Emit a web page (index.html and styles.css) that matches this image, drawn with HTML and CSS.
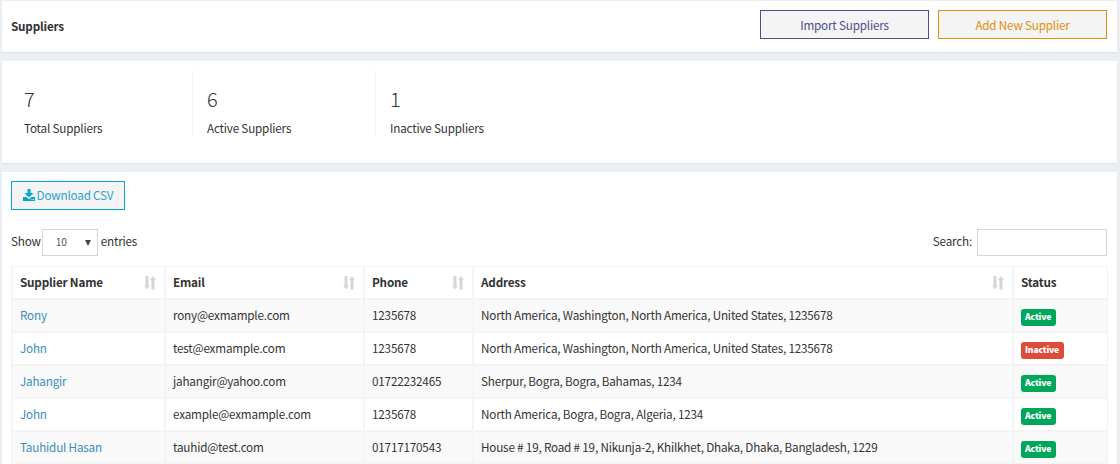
FILE: index.html
```html
<!DOCTYPE html>
<html lang="en">
<head>
<meta charset="utf-8">
<title>Suppliers</title>
<link rel="stylesheet" href="styles.css">
</head>
<body>
<svg width="0" height="0" class="defs">
  <symbol id="sort" viewBox="0 0 12 14"><path d="M1.500 0h3v9.500H6l-3 4L0 9.500h1.500zM7.500 13.500V4H6l3-4 3 4h-1.500v9.500z"/></symbol>
</svg>
<main class="page">
  <header class="box head">
    <h1 class="title">Suppliers</h1>
    <div class="actions">
      <a class="btn btn-purple">Import Suppliers</a>
      <a class="btn btn-orange">Add New Supplier</a>
    </div>
  </header>
  <section class="box stats">
    <div class="stat"><span class="num">7</span><span class="cap">Total Suppliers</span></div>
    <div class="stat"><span class="num">6</span><span class="cap">Active Suppliers</span></div>
    <div class="stat"><span class="num">1</span><span class="cap">Inactive Suppliers</span></div>
  </section>
  <section class="box list">
    <a class="btn btn-csv"><svg class="dl" viewBox="0 0 12 12"><path d="M4.500 0h3v4H10.500L6 8.500 1.500 4H4.500z"/><path fill-rule="evenodd" d="M0 8h3.500L6 10.300 8.500 8H12v4H0zM8.500 10v.9h.9V10zM10.200 10v.9h.9V10z"/></svg><span>Download CSV</span></a>
    <div class="controls">
      <div class="length"><span>Show</span><span class="select"><span>10</span><i class="caret"></i></span><span>entries</span></div>
      <label class="search"><span>Search:</span><input class="field" type="text"></label>
    </div>
    <table class="table">
      <colgroup><col class="c1"><col class="c2"><col class="c3"><col class="c4"><col class="c5"></colgroup>
      <thead><tr>
        <th><div class="th"><span>Supplier Name</span><svg class="sort"><use href="#sort"/></svg></div></th>
        <th><div class="th"><span>Email</span><svg class="sort"><use href="#sort"/></svg></div></th>
        <th><div class="th"><span>Phone</span><svg class="sort"><use href="#sort"/></svg></div></th>
        <th><div class="th"><span>Address</span><svg class="sort"><use href="#sort"/></svg></div></th>
        <th><div class="th"><span>Status</span></div></th>
      </tr></thead>
      <tbody>
        <tr><td><a class="link">Rony</a></td><td>rony@exmample.com</td><td>1235678</td><td>North America, Washington, North America, United States, 1235678</td><td><span class="label on">Active</span></td></tr>
        <tr><td><a class="link">John</a></td><td>test@exmample.com</td><td>1235678</td><td>North America, Washington, North America, United States, 1235678</td><td><span class="label off">Inactive</span></td></tr>
        <tr><td><a class="link">Jahangir</a></td><td>jahangir@yahoo.com</td><td>01722232465</td><td>Sherpur, Bogra, Bogra, Bahamas, 1234</td><td><span class="label on">Active</span></td></tr>
        <tr><td><a class="link">John</a></td><td>example@exmample.com</td><td>1235678</td><td>North America, Bogra, Bogra, Algeria, 1234</td><td><span class="label on">Active</span></td></tr>
        <tr><td><a class="link">Tauhidul Hasan</a></td><td>tauhid@test.com</td><td>01717170543</td><td>House # 19, Road # 19, Nikunja-2, Khilkhet, Dhaka, Dhaka, Bangladesh, 1229</td><td><span class="label on">Active</span></td></tr>
      </tbody>
    </table>
  </section>
</main>
</body>
</html>
```
FILE: styles.css
```css
* { box-sizing: border-box; }
html, body { height: 100%; }
body {
  margin: 0;
  overflow: hidden;
  background: #ebeef3;
  color: #333;
  font: 11.7px/20px "Noto Sans CJK SC", "Open Sans", sans-serif;
  letter-spacing: -.19px;
}
.defs { display: none; }
.page { height: 464px; overflow: hidden; padding: 1px 3px 0 2px; display: flex; flex-direction: column; gap: 9px; }
.box { flex: none; background: #fff; box-shadow: 0 1px 1px rgba(0, 0, 0, .05); }
.head { height: 51px; padding: 9px 10px 0 9px; display: flex; justify-content: space-between; }
.title { margin: 6px 0 0; font-size: 11.7px; line-height: 20px; font-weight: 700; }
.actions { display: flex; gap: 9px; }
.btn { display: flex; align-items: center; justify-content: center; height: 29px; background: #f4f4f4; border: 1px solid; }
.btn-purple { width: 169px; color: #514b8f; }
.btn-orange { width: 169px; color: #e08e0b; }
.btn-csv { width: 114px; color: #00a7d0; gap: 2px; }
.btn-csv span { margin-bottom: 2px; color: #2ba3cf; }
.dl { width: 12px; height: 12px; margin-bottom: 2px; fill: #00a7d0; }
.stats { height: 102px; padding: 9px 0 0 9px; display: flex; }
.stat { width: 183px; height: 67px; padding: 19px 0 0 14px; display: flex; flex-direction: column; border-right: 1px solid #f4f4f4; }
.stat:first-child { width: 182px; padding-left: 13px; }
.stat:last-child { border-right: 0; }
.num { font-size: 20px; line-height: 20px; font-weight: 300; }
.cap { margin-top: 9px; }
.list { height: 292px; padding: 9px 9px 0; }
.controls { display: flex; justify-content: space-between; margin-top: 19px; padding-right: 1px; height: 27px; }
.length, .search { display: flex; align-items: center; }
.length > span:not(.select), .search > span { margin-bottom: 4px; }
.select > span { margin-bottom: 2px; }
.select { display: flex; align-items: center; justify-content: space-between; width: 56px; height: 27px; margin: 0 3px 0 1px; padding: 0 6px 0 13px; border: 1px solid #d2d6de; font-size: 10.200px; color: #555; }
.caret { border: 3px solid transparent; border-top: 6px solid #444; border-bottom: 0; }
.field { width: 130px; height: 27px; margin-left: 5px; border: 1px solid #d2d6de; background: #fff; }
.table { width: 1097px; margin-top: 10px; table-layout: fixed; border-collapse: separate; border-spacing: 0; border-right: 1px solid #f4f4f4; }
.c1 { width: 153px; }
.c2 { width: 199px; }
.c3 { width: 109px; }
.c4 { width: 540px; }
.c5 { width: 95px; }
.table th, .table td { padding: 0 7px; text-align: left; white-space: nowrap; border-left: 2px solid #f4f4f4; border-bottom: 2px solid #f4f4f4; }
.table th { height: 34px; border-top: 1px solid #f4f4f4; font-weight: 700; }
.table td { height: 33px; padding-bottom: 2px; }
.table td:last-child { padding-bottom: 0; }
.table tbody tr:nth-child(odd) { background: #f9f9f9; }
.th { display: flex; align-items: center; justify-content: space-between; }
.th span { margin-bottom: 2px; }
.sort { width: 12px; height: 14px; margin-right: 1px; fill: #d6d6d6; }
.link { color: #3c8dbc; }
.label { display: block; width: fit-content; margin-top: 3px; padding: 0 5px 0 4px; height: 17px; line-height: 16px; font-size: 8.700px; font-weight: 900; color: #fff; border-radius: 3px; }
.on { background: #00a65a; }
.off { background: #dd4b39; }
```
